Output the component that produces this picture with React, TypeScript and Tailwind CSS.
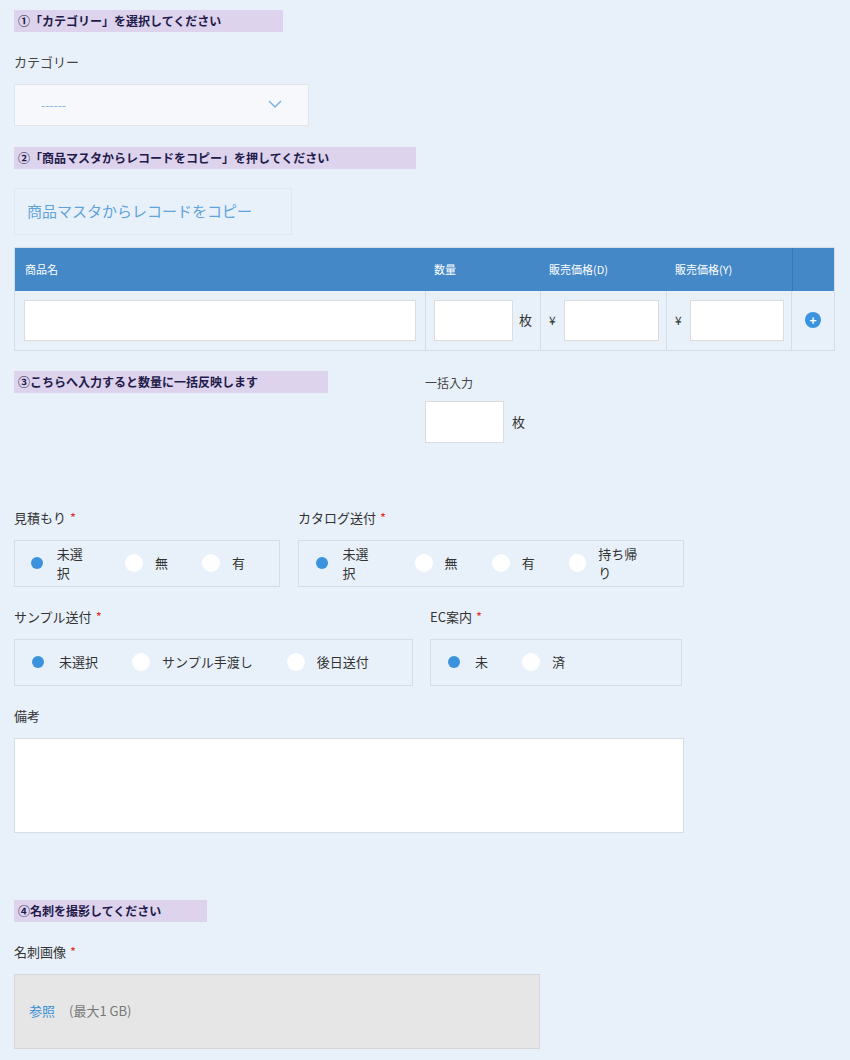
import React from "react";

const F = { fontFamily: '"Noto Sans CJK JP", "Noto Sans", sans-serif' };

function H({ children, w }: { children: React.ReactNode; w: string }) {
  return (
    <div className={`h-[22px] bg-[#ddd3ec] text-[#221a4a] font-bold text-[12px] leading-[22px] pl-1 ${w}`}>{children}</div>
  );
}

function Radio({ on, label }: { on?: boolean; label: string }) {
  return (
    <div className="flex items-center gap-[12px] mr-[34px]">
      <span className={`w-[18px] h-[18px] rounded-full flex items-center justify-center ${on ? "" : "bg-white"}`}>
        {on && <span className="w-[12px] h-[12px] rounded-full bg-[#3a93dc]" />}
      </span>
      <span className="text-[13px] text-[#333]">{label}</span>
    </div>
  );
}

function Group({ w, items }: { w: string; items: string[] }) {
  return (
    <div className={`h-[47px] border border-[#d4dde6] flex items-center pl-[14px] ${w}`}>
      {items.map((t, i) => <Radio key={i} on={i === 0} label={t} />)}
    </div>
  );
}

function Label({ t, req }: { t: string; req?: boolean }) {
  return (
    <div className="text-[13px] text-[#333] h-[22px] mb-[10px]">
      {t}{req && <span className="text-[#e4322b] ml-1">*</span>}
    </div>
  );
}

export default function App() {
  return (
    <div style={F} className="w-[850px] h-[1060px] bg-[#e8f1fa] pl-[14px] pt-[10px] overflow-hidden">
      <H w="w-[269px]">①「カテゴリー」を選択してください</H>
      <div className="mt-[20px] text-[13px] text-[#444]">カテゴリー</div>
      <div className="mt-[12px] w-[295px] h-[42px] bg-[#f6f8fb] border border-[#e1e6ea] flex items-center justify-between px-[26px]">
        <span className="text-[#7fb2e0] text-[12px]">------</span>
        <svg width="14" height="9" viewBox="0 0 14 9"><path d="M1 1l6 6 6-6" stroke="#7fb2e0" strokeWidth="1.5" fill="none" /></svg>
      </div>
      <div className="mt-[21px]"><H w="w-[402px]">②「商品マスタからレコードをコピー」を押してください</H></div>
      <div className="mt-[19px] w-[278px] h-[47px] border border-[#dce8f3] flex items-center pl-[12px] text-[15px] text-[#5fa3dc]">商品マスタからレコードをコピー</div>
      <div className="mt-[12px] w-[821px] border border-[#d4dde6]">
        <div className="h-[43px] bg-[#4488c8] flex text-white text-[11px] items-center">
          <div className="w-[411px] pl-[10px]">商品名</div>
          <div className="w-[115px] pl-[8px]">数量</div>
          <div className="w-[126px] pl-[8px]">販売価格(D)</div>
          <div className="w-[125px] pl-[8px]">販売価格(Y)</div>
          <div className="flex-1 h-full border-l border-[#3a76b0]" />
        </div>
        <div className="h-[59px] flex">
          <div className="w-[411px] border-r border-[#d4dde6] flex items-center pl-[9px]">
            <div className="w-[392px] h-[41px] bg-white border border-[#dcdcdc]" />
          </div>
          <div className="w-[115px] border-r border-[#d4dde6] flex items-center pl-[8px] gap-[6px]">
            <div className="w-[79px] h-[41px] bg-white border border-[#dcdcdc]" />
            <span className="text-[13px] text-[#333]">枚</span>
          </div>
          <div className="w-[126px] border-r border-[#d4dde6] flex items-center pl-[8px] gap-[8px]">
            <span className="text-[12px] text-[#333]">¥</span>
            <div className="w-[95px] h-[41px] bg-white border border-[#dcdcdc]" />
          </div>
          <div className="w-[125px] border-r border-[#d4dde6] flex items-center pl-[8px] gap-[8px]">
            <span className="text-[12px] text-[#333]">¥</span>
            <div className="w-[94px] h-[41px] bg-white border border-[#dcdcdc]" />
          </div>
          <div className="flex-1 flex items-center justify-center">
            <span className="w-[16px] h-[16px] rounded-full bg-[#3a93dc] text-white text-[12px] leading-[16px] text-center font-bold">+</span>
          </div>
        </div>
      </div>
      <div className="mt-[20px] flex">
        <div className="w-[411px]"><H w="w-[314px]">③こちらへ入力すると数量に一括反映します</H></div>
        <div>
          <div className="text-[12px] text-[#444] mt-[3px]">一括入力</div>
          <div className="mt-[9px] flex items-center gap-[8px]">
            <div className="w-[79px] h-[42px] bg-white border border-[#dcdcdc]" />
            <span className="text-[13px] text-[#333]">枚</span>
          </div>
        </div>
      </div>
      <div className="mt-[65px] flex gap-[18px]">
        <div><Label t="見積もり" req /><Group w="w-[266px]" items={["未選択", "無", "有"]} /></div>
        <div><Label t="カタログ送付" req /><Group w="w-[386px]" items={["未選択", "無", "有", "持ち帰り"]} /></div>
      </div>
      <div className="mt-[20px] flex gap-[17px]">
        <div><Label t="サンプル送付" req /><Group w="w-[399px]" items={["未選択", "サンプル手渡し", "後日送付"]} /></div>
        <div><Label t="EC案内" req /><Group w="w-[252px]" items={["未", "済"]} /></div>
      </div>
      <div className="mt-[20px]"><Label t="備考" /></div>
      <div className="w-[670px] h-[95px] bg-white border border-[#d4dde6]" />
      <div className="mt-[67px]"><H w="w-[193px]">④名刺を撮影してください</H></div>
      <div className="mt-[20px]"><Label t="名刺画像" req /></div>
      <div className="w-[526px] h-[75px] bg-[#e6e6e6] border border-[#d6d6d6] flex items-center pl-[14px] gap-[14px] text-[13px]">
        <span className="text-[#3a8fd6]">参照</span>
        <span className="text-[#777]">(最大1 GB)</span>
      </div>
    </div>
  );
}
